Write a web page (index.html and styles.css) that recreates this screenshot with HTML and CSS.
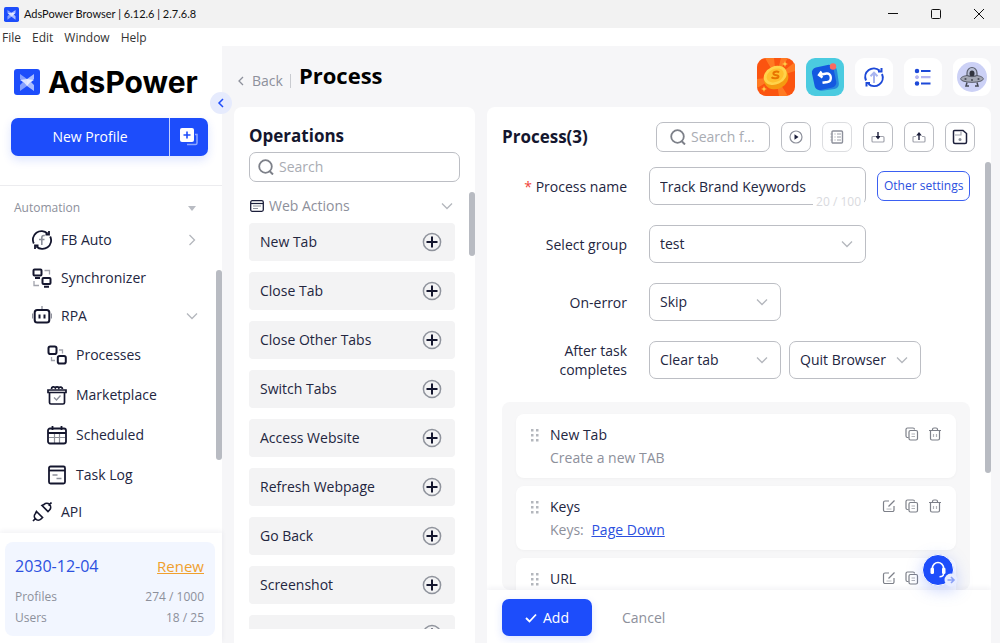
FILE: index.html
```html
<!DOCTYPE html>
<html lang="en">
<head>
	<meta charset="UTF-8">
	<meta name="viewport" content="width=device-width, initial-scale=1">
	<title>AdsPower Browser | 6.12.6 | 2.7.6.8</title>
	<link rel="stylesheet" href="styles.css">
</head>
<body>
	<!-- shared icons -->
	<svg class="sprite" aria-hidden="true">
		<symbol id="logo" viewBox="0 0 26 26">
			<rect width="26" height="26" rx="3" fill="#1d4dfb"/>
			<path d="M6 5l7 5v7l-7 5v-6l3-3-3-3z" fill="#86a1ff"/>
			<path d="M20 5l-7 5v7l7 5v-6l-3-3 3-3z" fill="#aabdff"/>
			<path d="M6 11l7-1 7 1-4 2.500L13 17l-3-3.500z" fill="#fff" opacity=".7"/>
		</symbol>
		<symbol id="down" viewBox="0 0 12 12"><path d="M1 3.500l5 5 5-5" fill="none" stroke="currentColor" stroke-width="1.300"/></symbol>
		<symbol id="search" viewBox="0 0 16 16"><circle cx="7.500" cy="7.500" r="6.300" fill="none" stroke="currentColor" stroke-width="1.800"/><path d="M11.500 12l3.500 3.500" stroke="currentColor" stroke-width="2"/></symbol>
		<symbol id="plus" viewBox="0 0 20 20"><circle cx="10" cy="10" r="8.600" fill="none" stroke="#8f939c" stroke-width="1.500"/><path d="M4.500 10h11M10 4.500v11" stroke="#14162e" stroke-width="2"/></symbol>
		<symbol id="drag" viewBox="0 0 8 13"><path d="M0 0h2.500v2.500H0zM5 0h2.500v2.500H5zM0 5h2.500v2.500H0zM5 5h2.500v2.500H5zM0 10h2.500v2.500H0zM5 10h2.500v2.500H5z" fill="#b4b7bd"/></symbol>
		<symbol id="edit" viewBox="0 0 14 14"><g fill="none" stroke="currentColor" stroke-width="1.200"><path d="M7 2H3a1.500 1.500 0 0 0-1.500 1.500v7.500A1.500 1.500 0 0 0 3 12.500h7.500A1.500 1.500 0 0 0 12 11V7"/><path d="M6.500 7.500L12.500 1.500"/><path d="M4.500 10h5" opacity=".5"/></g></symbol>
		<symbol id="copy" viewBox="0 0 14 14"><g fill="none" stroke="currentColor" stroke-width="1.200"><path d="M3.500 10.500H2.500a1.500 1.500 0 0 1-1.500-1.500V2.500A1.500 1.500 0 0 1 2.500 1H8a1.500 1.500 0 0 1 1.500 1.500"/><rect x="4" y="3.500" width="8.500" height="9.500" rx="1.500"/><path d="M6.500 7h3.500M6.500 9.500h3.500" opacity=".6"/></g></symbol>
		<symbol id="trash" viewBox="0 0 14 14"><g fill="none" stroke="currentColor" stroke-width="1.200"><path d="M1 3.500h12M2.500 3.500v8a1.500 1.500 0 0 0 1.500 1.500h6a1.500 1.500 0 0 0 1.500-1.500v-8M4.500 3.500v-1a1.500 1.500 0 0 1 1.500-1.500h2a1.500 1.500 0 0 1 1.500 1.500v1"/><path d="M5.500 7v3M8.500 7v3" opacity=".6"/></g></symbol>
	</svg>

	<header class="titlebar">
		<svg class="titlebar-logo"><use href="#logo"/></svg>
		<span>AdsPower Browser | 6.12.6 | 2.7.6.8</span>
		<div class="window-buttons">
			<button type="button" aria-label="Minimize"><svg viewBox="0 0 10 10"><path d="M0 4.500h10" stroke="#111"/></svg></button>
			<button type="button" aria-label="Maximize"><svg viewBox="0 0 10 10"><rect x=".5" y=".5" width="9" height="9" rx="1" fill="none" stroke="#111"/></svg></button>
			<button type="button" aria-label="Close"><svg viewBox="0 0 10 10"><path d="M0 0l10 10M10 0L0 10" stroke="#111"/></svg></button>
		</div>
	</header>
	<nav class="menubar">
		<a href="#">File</a>
		<a href="#">Edit</a>
		<a href="#">Window</a>
		<a href="#">Help</a>
	</nav>

	<div class="layout">
		<aside class="sidebar">
			<div class="brand">
				<svg class="brand-logo"><use href="#logo"/></svg>
				<span>AdsPower</span>
			</div>
			<div class="new-profile">
				<button type="button" class="new-profile-main">New Profile</button>
				<button type="button" class="new-profile-batch" aria-label="Batch create">
					<svg viewBox="0 0 18 18"><path d="M7 16.500h8.500a1.500 1.500 0 0 0 1.500-1.500V6.500h-2" fill="none" stroke="#8ea6ff" stroke-width="1.500"/><rect width="14" height="14" rx="2" fill="#fff"/><path d="M7 3.500v7M3.500 7h7" stroke="#1d4dfb" stroke-width="1.600"/></svg>
				</button>
			</div>
			<button type="button" class="collapse" aria-label="Collapse"><svg viewBox="0 0 8 10"><path d="M6 1L2 5l4 4" fill="none" stroke="#1d4dfb" stroke-width="1.500"/></svg></button>

			<div class="side-nav">
				<div class="nav-title">Automation <svg viewBox="0 0 8 5"><path d="M0 0h8L4 5z" fill="#b9bcc3"/></svg></div>
				<ul>
					<li><a href="#">
						<svg viewBox="0 0 20 20"><g fill="none" stroke="currentColor" stroke-width="1.800"><path d="M1.800 13.500A8.600 8.600 0 0 1 15.500 3.500M18.200 6.500A8.600 8.600 0 0 1 4.500 16.500M17 1v3.500h-3.500M3 19v-3.500h3.500"/><path d="M12.800 5.500h-1q-2 0-2 2.300V15M7 9.500h5.500" stroke="#8d909b" stroke-width="1.600"/></g></svg>
						FB Auto<svg class="arrow right"><use href="#down"/></svg></a></li>
					<li><a href="#">
						<svg viewBox="0 0 20 20"><g fill="none" stroke="currentColor" stroke-width="2"><rect x="1.500" y="1.500" width="8" height="6" rx="1"/><rect x="10.500" y="10" width="8" height="6" rx="1"/><path d="M3 10h5M12 18.700h5"/><path d="M12.500 2.500h5v4M2 13v4.500h5" stroke="#a2a4ad" stroke-width="1.300"/></g></svg>
						Synchronizer</a></li>
					<li><a href="#">
						<svg viewBox="0 0 20 20"><g fill="none" stroke="currentColor" stroke-width="2"><rect x="2.700" y="4" width="14.600" height="12.500" rx="2.500"/><path d="M7.500 8.500v4M12.500 8.500v4"/><path d="M10 0v3M.5 7.500v5M19.500 7.500v5" stroke="#8d909b" stroke-width="1.300"/></g></svg>
						RPA<svg class="arrow"><use href="#down"/></svg></a>
						<ul class="sub-nav">
							<li><a href="#">
								<svg viewBox="0 0 20 20"><g fill="none" stroke="currentColor" stroke-width="2"><rect x="1.500" y="1.500" width="8" height="7.500" rx="1.800"/><rect x="10.800" y="11" width="8" height="7.500" rx="1.800"/><path d="M12 5h3.500v3.500M4.500 12v3.500H8" stroke="#a2a4ad" stroke-width="1.300"/></g></svg>
								Processes</a></li>
							<li><a href="#">
								<svg viewBox="0 0 20 20"><g fill="none" stroke="currentColor" stroke-width="1.700"><path d="M2.500 7.500v10a1.500 1.500 0 0 0 1.500 1.500h12a1.500 1.500 0 0 0 1.500-1.500v-10M1 5h18v2.500H1z"/><path d="M4.500 4a2 2 0 0 1 3.800-1 2 2 0 0 1 3.500 0A2 2 0 0 1 15.500 4"/><path d="M7 12.500l2.500 2.500 4-4.500" stroke="#8d909b" stroke-width="1.400"/></g></svg>
								Marketplace</a></li>
							<li><a href="#">
								<svg viewBox="0 0 20 20"><g fill="none" stroke="#8d909b" stroke-width="1.200"><path d="M2 12.500h16M7.500 8v10M12.500 8v10"/></g><g fill="none" stroke="currentColor" stroke-width="1.800"><rect x="1" y="3.500" width="18" height="15" rx="2"/><path d="M1 8h18M5.500 1v4M14.500 1v4"/></g></svg>
								Scheduled</a></li>
							<li><a href="#">
								<svg viewBox="0 0 20 20"><g fill="none" stroke="currentColor" stroke-width="1.800"><rect x="2" y="1.500" width="16" height="17" rx="1.500"/><path d="M2 5.500h16"/><path d="M5.500 10h5M9.500 13.500h5" stroke="#8d909b" stroke-width="1.400"/></g></svg>
								Task Log</a></li>
						</ul>
					</li>
					<li><a href="#">
						<svg viewBox="0 0 20 20"><g fill="none" stroke="currentColor" stroke-width="1.700"><path d="M4.500 9.500l6 6-1.500 1.500a3.800 3.800 0 0 1-5.500-5.500zM1 19l3-3M10 3.500l6 6 1.500-1.500A3.800 3.800 0 0 0 12 2.500zM16.500 3.500L19.500.5"/></g></svg>
						API</a></li>
				</ul>
			</div>

			<div class="side-footer">
				<div class="plan">
					<div class="plan-row plan-date"><span>2030-12-04</span><a href="#">Renew</a></div>
					<div class="plan-row"><span>Profiles</span><span>274 / 1000</span></div>
					<div class="plan-row"><span>Users</span><span>18 / 25</span></div>
				</div>
			</div>
			<div class="scrollbar side-scroll"></div>
		</aside>

		<main class="main">
			<div class="page-head">
				<a href="#" class="back"><svg viewBox="0 0 6 10"><path d="M5 1L1 5l4 4" fill="none" stroke="currentColor" stroke-width="1.300"/></svg>Back</a>
				<h1>Process</h1>
				<div class="head-tools">
					<button type="button" class="tool" aria-label="Rewards">
						<svg viewBox="0 0 38 38"><rect width="38" height="38" fill="#fb5410"/><path d="M19 19L8 0h9zM19 19L38 4v9zM19 19l12 19h-9zM19 19L0 30v-9zM19 19L24 0h7z" fill="#ff7a22"/><ellipse cx="19" cy="20.500" rx="12.500" ry="10.500" fill="#f59a10" transform="rotate(-25 19 20)"/><ellipse cx="18" cy="17.500" rx="12" ry="9" fill="#ffd34a" transform="rotate(-25 18 17)"/><ellipse cx="18" cy="17.500" rx="9" ry="6.500" fill="#ffc02e" transform="rotate(-25 18 17)"/><path d="M22 14.500c-2-2-6-.5-5.500 1.500s5 .5 5 2.500-5 2.500-7 .8" fill="none" stroke="#e87400" stroke-width="2"/><path d="M28 3l.8 2.200L31 6l-2.200.8L28 9l-.8-2.200L25 6l2.200-.8zM7 28l.8 2.200L10 31l-2.200.8L7 34l-.8-2.200L4 31l2.200-.8z" fill="#ffd34a"/></svg>
					</button>
					<button type="button" class="tool" aria-label="Updates">
						<svg viewBox="0 0 38 38"><rect width="38" height="38" fill="#4bcbe0"/><rect x="9" y="9" width="23" height="23" rx="5" fill="#2687dd" transform="rotate(-8 20 20)"/><rect x="7" y="8" width="22" height="23" rx="5" fill="#1458e0" transform="rotate(-12 18 19)"/><path d="M13 17l7.500-1.500c5-.8 6 7.500 1 8.500l-5 .8M15.500 13.500L13 17l3.500 2.500" fill="none" stroke="#fff" stroke-width="2.400"/><circle cx="27" cy="8.500" r="3.200" fill="#fb6a60"/></svg>
					</button>
					<button type="button" class="tool" aria-label="Sync">
						<svg viewBox="0 0 38 38"><g fill="none" stroke="#1d49d8" stroke-width="2"><path d="M11 22.500a8.600 8.600 0 0 1 13.500-10M27 16A8.600 8.600 0 0 1 13.500 26M26.500 10v3.500H23M11.500 28.500V25H15"/><path d="M19 25V15M15.500 18.200l3.500-3.500 3.500 3.500" stroke="#a9b5ef"/></g></svg>
					</button>
					<button type="button" class="tool" aria-label="Tasks">
						<svg viewBox="0 0 38 38"><g stroke="#1d49d8" stroke-width="2.200"><circle cx="13" cy="13" r="1.500" fill="#1d49d8" stroke-width="1.500"/><path d="M17 13h9.500M17 25.500h9.500"/><circle cx="13" cy="25.500" r="1.500" fill="#1d49d8" stroke-width="1.500"/></g><g stroke="#b4b5f2" stroke-width="2.200"><circle cx="13" cy="19.200" r="1.500" fill="#b4b5f2" stroke-width="1"/><path d="M17 19.200h9.500"/></g></svg>
					</button>
					<button type="button" class="tool" aria-label="Account">
						<svg viewBox="0 0 38 38"><circle cx="19" cy="19" r="15" fill="#ccd1f6"/><path d="M14 18v-3a5 5.500 0 0 1 10 0v3z" fill="#b9bfd6" stroke="#5a5f6e" stroke-width="1.200"/><ellipse cx="19" cy="15.500" rx="2.500" ry="3" fill="#30333d"/><path d="M14 17.500c-6 1-8.500 3.500-4 5.500 5 1.800 13 1.800 18 0 4.500-2 2-4.500-4-5.500-2 1.500-8 1.500-10 0z" fill="#a3a7b4" stroke="#565a67"/><path d="M14 24.500l-1 3.500h3M24 24.500l1 3.500h-3" fill="none" stroke="#454956" stroke-width="1.500"/><circle cx="12.500" cy="21" r="1.100" fill="#4a4e5b"/><circle cx="19" cy="22" r="1.100" fill="#4a4e5b"/><circle cx="25.500" cy="21" r="1.100" fill="#4a4e5b"/></svg>
					</button>
				</div>
			</div>

			<div class="panels">
				<section class="panel operations">
					<h2>Operations</h2>
					<label class="search-box">
						<svg><use href="#search"/></svg>
						<input type="text" placeholder="Search" aria-label="Search operations">
					</label>
					<button type="button" class="group-title">
						<svg viewBox="0 0 14 12"><rect x=".7" y=".7" width="12.600" height="10.600" rx="1.500" fill="none" stroke="#1c1f3b" stroke-width="1.300"/><path d="M1 3.500h12" stroke="#1c1f3b" stroke-width="1.200"/><path d="M3 6h8M3 8.500h5" stroke="#8d909b"/></svg>
						Web Actions
						<svg class="arrow"><use href="#down"/></svg>
					</button>
					<ul class="action-list">
						<li><button type="button">New Tab<svg><use href="#plus"/></svg></button></li>
						<li><button type="button">Close Tab<svg><use href="#plus"/></svg></button></li>
						<li><button type="button">Close Other Tabs<svg><use href="#plus"/></svg></button></li>
						<li><button type="button">Switch Tabs<svg><use href="#plus"/></svg></button></li>
						<li><button type="button">Access Website<svg><use href="#plus"/></svg></button></li>
						<li><button type="button">Refresh Webpage<svg><use href="#plus"/></svg></button></li>
						<li><button type="button">Go Back<svg><use href="#plus"/></svg></button></li>
						<li><button type="button">Screenshot<svg><use href="#plus"/></svg></button></li>
						<li><button type="button" aria-label="More"><svg><use href="#plus"/></svg></button></li>
					</ul>
					<div class="scrollbar op-scroll"></div>
				</section>

				<section class="panel process">
					<div class="process-head">
						<h2>Process(3)</h2>
						<label class="search-box search-small">
							<svg><use href="#search"/></svg>
							<input type="text" placeholder="Search f..." aria-label="Search flow">
						</label>
						<button type="button" class="icon-btn" aria-label="Run"><svg viewBox="0 0 16 16"><circle cx="8" cy="8" r="6" fill="none" stroke="#8d909b" stroke-width="1.200"/><path d="M6.500 5.300L10.500 8l-4 2.700z" fill="#1c1f3b"/></svg></button>
						<button type="button" class="icon-btn" aria-label="Log" disabled><svg viewBox="0 0 16 16"><rect x="3" y="2" width="10.500" height="12" rx="1" fill="none" stroke="#8d909b" stroke-width="1.400"/><path d="M5.500 5h1M8 5h4M5.500 8h1M8 8h4M5.500 11h1M8 11h4M1.500 5h2M1.500 8h2M1.500 11h2" stroke="#9a9da6"/></svg></button>
						<button type="button" class="icon-btn" aria-label="Import"><svg viewBox="0 0 16 16"><path d="M5 7.500H3A1 1 0 0 0 2 8.500v3.500a1 1 0 0 0 1 1h10a1 1 0 0 0 1-1V8.500a1 1 0 0 0-1-1h-2" fill="none" stroke="#a2a4ad" stroke-width="1.200"/><path d="M8 3v5" stroke="#1c1f3b" stroke-width="1.400"/><path d="M5.200 7h5.600L8 10.500z" fill="#1c1f3b"/></svg></button>
						<button type="button" class="icon-btn" aria-label="Export"><svg viewBox="0 0 16 16"><path d="M5 7.500H3A1 1 0 0 0 2 8.500v3.500a1 1 0 0 0 1 1h10a1 1 0 0 0 1-1V8.500a1 1 0 0 0-1-1h-2" fill="none" stroke="#a2a4ad" stroke-width="1.200"/><path d="M8 5.500v5.500" stroke="#1c1f3b" stroke-width="1.400"/><path d="M5.200 6.500h5.600L8 3z" fill="#1c1f3b"/></svg></button>
						<button type="button" class="icon-btn" aria-label="Save"><svg viewBox="0 0 16 16"><path d="M2.500 1.500h8.500l3.500 3v8.500a1.500 1.500 0 0 1-1.500 1.500H3a1.500 1.500 0 0 1-1.500-1.500V2.500a1 1 0 0 1 1-1z" fill="none" stroke="#1c1f3b" stroke-width="1.500"/><path d="M3 6h6V3" fill="none" stroke="#a2a4ad" stroke-width="1.200"/><circle cx="8" cy="10.500" r="1.500" fill="#8d909b"/></svg></button>
					</div>

					<form class="process-form">
						<div class="form-row">
							<label for="name"><i>*</i> Process name</label>
							<div class="name-box">
								<input type="text" id="name" value="Track Brand Keywords">
								<span class="count">20 / 100</span>
							</div>
							<button type="button" class="other-btn">Other settings</button>
						</div>
						<div class="form-row">
							<label for="group">Select group</label>
							<div class="select-box wide"><select id="group"><option>test</option></select><svg><use href="#down"/></svg></div>
						</div>
						<div class="form-row">
							<label for="error">On-error</label>
							<div class="select-box"><select id="error"><option>Skip</option></select><svg><use href="#down"/></svg></div>
						</div>
						<div class="form-row">
							<label for="after">After task completes</label>
							<div class="select-box"><select id="after"><option>Clear tab</option></select><svg><use href="#down"/></svg></div>
							<div class="select-box"><select aria-label="Browser action"><option>Quit Browser</option></select><svg><use href="#down"/></svg></div>
						</div>
					</form>

					<div class="steps">
						<div class="step">
							<svg class="drag"><use href="#drag"/></svg>
							<div class="step-text">
								<h3>New Tab</h3>
								<p>Create a new TAB</p>
							</div>
							<div class="step-tools">
								<button type="button" aria-label="Copy"><svg><use href="#copy"/></svg></button>
								<button type="button" aria-label="Delete"><svg><use href="#trash"/></svg></button>
							</div>
						</div>
						<div class="step">
							<svg class="drag"><use href="#drag"/></svg>
							<div class="step-text">
								<h3>Keys</h3>
								<p>Keys: <a href="#">Page Down</a></p>
							</div>
							<div class="step-tools">
								<button type="button" aria-label="Edit"><svg><use href="#edit"/></svg></button>
								<button type="button" aria-label="Copy"><svg><use href="#copy"/></svg></button>
								<button type="button" aria-label="Delete"><svg><use href="#trash"/></svg></button>
							</div>
						</div>
						<div class="step">
							<svg class="drag"><use href="#drag"/></svg>
							<div class="step-text">
								<h3>URL</h3>
							</div>
							<div class="step-tools">
								<button type="button" aria-label="Edit"><svg><use href="#edit"/></svg></button>
								<button type="button" aria-label="Copy"><svg><use href="#copy"/></svg></button>
								<button type="button" aria-label="Delete"><svg><use href="#trash"/></svg></button>
							</div>
						</div>
					</div>

					<div class="process-footer">
						<button type="button" class="add-btn"><svg viewBox="0 0 12 10"><path d="M1 5l3.500 3.500L11 1.500" fill="none" stroke="#fff" stroke-width="1.800"/></svg>Add</button>
						<button type="button" class="cancel-btn">Cancel</button>
					</div>
					<div class="scrollbar process-scroll"></div>
					<button type="button" class="support" aria-label="Support">
						<svg viewBox="0 0 36 34"><circle cx="15" cy="15" r="15.500" fill="#1d4dfb" stroke="#fff"/><path d="M9.500 16v-3a5.500 5.500 0 0 1 11 0v6q0 2.500-4 2.800" fill="none" stroke="#fff" stroke-width="1.500"/><rect x="7.500" y="12.500" width="3.500" height="6.500" rx="1.500" fill="#fff"/><rect x="19" y="12.500" width="3.500" height="6.500" rx="1.500" fill="#fff"/><circle cx="28" cy="25" r="6.500" fill="#e8edff"/><path d="M24.500 25h6M28 22l3 3-3 3" fill="none" stroke="#8ba1f7" stroke-width="1.600"/></svg>
					</button>
				</section>
			</div>
		</main>
	</div>
</body>
</html>
```
FILE: styles.css
```css
* {
	margin: 0;
	padding: 0;
	box-sizing: border-box;
}
body {
	height: 100vh;
	display: flex;
	flex-direction: column;
	overflow: hidden;
	background: #fff;
	color: #23263f;
	font-family: "Open Sans", "Noto Sans", sans-serif;
	font-size: 14px;
	line-height: 20px;
}
ul {
	list-style: none;
}
a {
	color: inherit;
	text-decoration: none;
}
button, input, select {
	font: inherit;
	color: inherit;
	border: 0;
	background: none;
	outline: none;
}
button {
	cursor: pointer;
}
svg {
	display: block;
	flex: none;
}
.sprite {
	position: absolute;
	width: 0;
	height: 0;
}
.arrow {
	width: 12px;
	height: 12px;
	margin-left: auto;
	color: #b4b7bd;
}
.arrow.right {
	transform: rotate(-90deg);
}
.scrollbar {
	position: absolute;
	width: 6px;
	border-radius: 3px;
	background: #b8bbc2;
}

/* window bars */
.titlebar {
	flex: none;
	height: 28px;
	display: flex;
	align-items: center;
	padding-left: 4px;
	background: #f2f2f2;
	color: #111;
	font-family: Lato, sans-serif;
	font-size: 11px;
}
.titlebar-logo {
	width: 15px;
	height: 15px;
	margin-right: 5px;
}
.window-buttons {
	display: flex;
	margin-left: auto;
}
.window-buttons button {
	width: 43px;
	height: 24px;
	display: flex;
	align-items: center;
	justify-content: center;
}
.window-buttons svg {
	width: 10px;
	height: 10px;
}
.menubar {
	flex: none;
	height: 18px;
	display: flex;
	align-items: center;
	gap: 11px;
	padding: 1px 0 0 2px;
	color: #333;
	font-size: 12px;
	line-height: 17px;
}

.layout {
	flex: 1;
	min-height: 0;
	display: flex;
}

/* sidebar */
.sidebar {
	position: relative;
	z-index: 1;
	flex: none;
	width: 222px;
	display: flex;
	flex-direction: column;
	background: #fff;
}
.brand {
	height: 72px;
	display: flex;
	align-items: center;
	gap: 8px;
	padding-left: 14px;
	color: #000;
	font-family: Inter, sans-serif;
	font-size: 30px;
	font-weight: 700;
}
.brand-logo {
	width: 26px;
	height: 26px;
}
.new-profile {
	display: flex;
	height: 38px;
	margin: 0 14px 0 11px;
	border-radius: 7px;
	background: #1d4dfb;
	color: #fff;
	box-shadow: 0 4px 10px rgba(29, 77, 251, .15);
}
.new-profile-main {
	flex: 1;
}
.new-profile-batch {
	width: 39px;
	display: flex;
	align-items: center;
	justify-content: center;
	border-left: 1px solid #c3d0ff;
}
.new-profile-batch svg {
	width: 18px;
	height: 18px;
}
.collapse {
	position: absolute;
	top: 46px;
	right: -10px;
	width: 22px;
	height: 22px;
	display: flex;
	align-items: center;
	justify-content: center;
	border-radius: 50%;
	background: #e6ebfd;
}
.collapse svg {
	width: 8px;
	height: 10px;
}
.side-nav {
	flex: 1;
	min-height: 0;
	overflow: hidden;
	margin-top: 29px;
	padding-top: 9px;
	border-top: 1px solid #ececef;
}
.nav-title {
	height: 26px;
	display: flex;
	align-items: center;
	justify-content: space-between;
	padding: 0 26px 0 14px;
	color: #8d909b;
	font-size: 12px;
}
.nav-title svg {
	width: 8px;
	height: 5px;
}
.side-nav a {
	height: 38px;
	display: flex;
	align-items: center;
	gap: 9px;
	padding: 0 24px 0 32px;
}
.side-nav a svg:first-child {
	width: 20px;
	height: 20px;
	color: #14162e;
}
.sub-nav {
	display: grid;
	gap: 4px;
	padding-top: 2px;
}
.side-nav .sub-nav a {
	height: 36px;
	padding-left: 47px;
}
.side-footer {
	flex: none;
	padding: 9px 7px 7px 5px;
	background: #fff;
	box-shadow: 0 -2px 5px rgba(30, 40, 90, .06);
}
.plan {
	padding: 12px 11px 8px 10px;
	border-radius: 8px;
	background: #f2f6ff;
	color: #8d909b;
	font-size: 12px;
}
.plan-row {
	display: flex;
	justify-content: space-between;
	line-height: 21px;
}
.plan-date {
	margin-bottom: 7px;
	color: #2c50e0;
	font-size: 16px;
	line-height: 25px;
}
.plan-date a {
	color: #f0a02e;
	font-size: 15px;
	text-decoration: underline;
}
.side-scroll {
	top: 224px;
	right: 0;
	height: 190px;
}

/* page */
.main {
	flex: 1;
	min-width: 0;
	display: flex;
	flex-direction: column;
	padding: 0 9px 0 12px;
	background: #f6f6f8;
}
.page-head {
	flex: none;
	height: 61px;
	display: flex;
	align-items: center;
}
.back {
	display: flex;
	align-items: center;
	gap: 8px;
	margin: 8px 8px 0 4px;
	padding-right: 7px;
	border-right: 1px solid #c9cbd0;
	color: #8d909b;
	line-height: 14px;
}
.back svg {
	width: 6px;
	height: 10px;
}
h1 {
	padding-bottom: 3px;
	color: #000;
	font-size: 22px;
	line-height: 30px;
}
.head-tools {
	display: flex;
	gap: 11px;
	margin-left: auto;
}
.tool {
	width: 38px;
	height: 38px;
	overflow: hidden;
	border-radius: 9px;
	background: #fff;
}
.panels {
	flex: 1;
	min-height: 0;
	display: flex;
	gap: 12px;
}
.panel {
	position: relative;
	display: flex;
	flex-direction: column;
	border-radius: 8px 8px 0 0;
	background: #fff;
}
h2 {
	color: #14162e;
	font-size: 17px;
	line-height: 24px;
}
.search-box {
	height: 30px;
	flex: none;
	display: flex;
	align-items: center;
	gap: 5px;
	padding: 0 8px;
	border: 1px solid #bcbec4;
	border-radius: 7px;
	color: #7d8089;
}
.search-box svg {
	width: 16px;
	height: 16px;
}
.search-box input {
	flex: 1;
	min-width: 0;
}
.search-box input::placeholder {
	color: #a9acb3;
	opacity: 1;
}

/* operations */
.operations {
	flex: none;
	width: 241px;
	padding: 17px 15px 14px;
}
.operations .search-box {
	margin-top: 4px;
}
.group-title {
	flex: none;
	height: 41px;
	display: flex;
	align-items: center;
	gap: 5px;
	padding: 7px 7px 0 1px;
	color: #8d909b;
}
.group-title svg:first-child {
	width: 14px;
	height: 12px;
}
.action-list {
	flex: 1;
	min-height: 0;
	overflow: hidden;
	margin-right: 5px;
	display: flex;
	flex-direction: column;
	gap: 11px;
}
.action-list button {
	width: 100%;
	height: 38px;
	display: flex;
	align-items: center;
	padding: 0 13px 0 11px;
	border-radius: 4px;
	background: #f3f3f4;
}
.action-list svg {
	width: 20px;
	height: 20px;
	margin-left: auto;
}
.op-scroll {
	top: 85px;
	right: 0;
	height: 64px;
}

/* process */
.process {
	flex: 1;
	min-width: 0;
	padding-top: 15px;
	overflow: hidden;
}
.process-head {
	flex: none;
	display: flex;
	align-items: center;
	gap: 11px;
	padding: 0 16px 0 15px;
}
.search-small {
	width: 114px;
	margin-left: auto;
	padding: 0 10px 0 13px;
}
.icon-btn {
	width: 30px;
	height: 30px;
	display: flex;
	align-items: center;
	justify-content: center;
	border: 1px solid #bcbec4;
	border-radius: 7px;
}
.icon-btn:disabled {
	border-color: #dcdde0;
}
.icon-btn svg {
	width: 16px;
	height: 16px;
}
.process-form {
	flex: none;
	display: grid;
	gap: 20px;
	padding: 15px 0 23px 35px;
}
.form-row {
	display: flex;
	align-items: center;
	gap: 8px;
}
.form-row label {
	width: 105px;
	margin-right: 14px;
	text-align: right;
	line-height: 19px;
	flex: none;
}
.form-row label i {
	color: #f04438;
	font-style: normal;
}
.name-box {
	position: relative;
	width: 217px;
	margin-right: 3px;
}
.name-box input {
	display: block;
	width: 100%;
	height: 38px;
	padding: 0 10px;
	border: 1px solid #bcbec4;
	border-radius: 7px;
}
.count {
	position: absolute;
	right: 2px;
	bottom: -5px;
	padding: 0 3px;
	background: #fff;
	color: #d9dade;
	font-size: 12px;
	line-height: 16px;
}
.other-btn {
	height: 30px;
	padding: 0 6px;
	border: 1px solid #3b60f2;
	border-radius: 7px;
	color: #2c50e0;
	font-size: 12px;
}
.select-box {
	position: relative;
	width: 132px;
}
.select-box.wide {
	width: 217px;
}
.select-box select {
	display: block;
	width: 100%;
	height: 38px;
	padding: 0 30px 0 10px;
	border: 1px solid #bcbec4;
	border-radius: 7px;
	-webkit-appearance: none;
	appearance: none;
}
.select-box svg {
	position: absolute;
	top: 13px;
	right: 13px;
	width: 12px;
	height: 12px;
	color: #b4b7bd;
	pointer-events: none;
}
.steps {
	flex: 1;
	min-height: 0;
	overflow: hidden;
	display: flex;
	flex-direction: column;
	gap: 8px;
	margin: 0 21px 0 15px;
	padding: 12px 14px 0;
	border-radius: 8px;
	background: #f7f7f8;
}
.step {
	flex: none;
	min-height: 64px;
	display: flex;
	align-items: flex-start;
	padding: 9px 14px 9px 15px;
	border-radius: 8px;
	background: #fff;
	box-shadow: 0 1px 3px rgba(0, 0, 0, .03);
}
.drag {
	width: 8px;
	height: 13px;
	margin: 6px 11px 0 0;
}
.step-text {
	flex: 1;
}
.step-text h3 {
	font-size: 14px;
	font-weight: 400;
	line-height: 24px;
}
.step-text p {
	color: #8d909b;
	line-height: 22px;
}
.step-text a {
	margin-left: 4px;
	color: #2c50e0;
	text-decoration: underline;
}
.step-tools {
	display: flex;
	gap: 9px;
	padding-top: 4px;
	color: #7d8089;
}
.step-tools svg {
	width: 14px;
	height: 14px;
}
.process-footer {
	position: relative;
	flex: none;
	display: flex;
	gap: 30px;
	padding: 9px 15px 7px;
	background: #fff;
	box-shadow: 0 -2px 5px rgba(30, 40, 90, .06);
}
.add-btn {
	width: 90px;
	height: 37px;
	display: flex;
	align-items: center;
	justify-content: center;
	gap: 6px;
	border-radius: 7px;
	background: #1d4dfb;
	color: #fff;
	box-shadow: 0 3px 8px rgba(29, 77, 251, .15);
}
.add-btn svg {
	width: 12px;
	height: 10px;
}
.cancel-btn {
	color: #8d909b;
}
.process-scroll {
	top: 55px;
	right: 0;
	height: 311px;
}
.support {
	position: absolute;
	right: 32px;
	bottom: 54px;
	width: 36px;
	height: 34px;
	border-radius: 50%;
	filter: drop-shadow(0 4px 8px rgba(29, 77, 251, .25));
}
.support svg {
	overflow: visible;
}
```
